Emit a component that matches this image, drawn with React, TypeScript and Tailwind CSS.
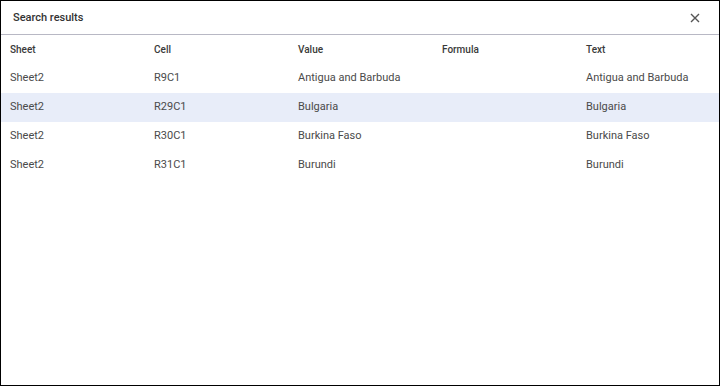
import React from "react";

const rows = [
  ["Sheet2", "R9C1", "Antigua and Barbuda", "", "Antigua and Barbuda"],
  ["Sheet2", "R29C1", "Bulgaria", "", "Bulgaria"],
  ["Sheet2", "R30C1", "Burkina Faso", "", "Burkina Faso"],
  ["Sheet2", "R31C1", "Burundi", "", "Burundi"],
];

export default function App() {
  return (
    <div
      className="w-[720px] h-[386px] border border-black bg-white flex flex-col box-border"
      style={{ fontFamily: "Roboto, 'Noto Sans', sans-serif" }}
    >
      <div className="h-[34px] shrink-0 flex items-center justify-between pl-[12px] pr-[19px] pt-[1px] border-b border-[#b8b8c4]">
        <span className="text-[11px] font-medium text-[#333]">Search results</span>
        <svg width="10" height="10" viewBox="0 0 10 10">
          <path d="M1 1 L9 9 M9 1 L1 9" stroke="#555" strokeWidth="1.4" />
        </svg>
      </div>
      <div className="grid grid-cols-[144px_144px_144px_144px_141px] pl-[9px] h-[29px] items-center text-[10px] font-medium text-[#3a3a3a]">
        <span>Sheet</span>
        <span>Cell</span>
        <span>Value</span>
        <span>Formula</span>
        <span>Text</span>
      </div>
      {rows.map((r, i) => (
        <div
          key={i}
          className={
            "grid grid-cols-[144px_144px_144px_144px_141px] pl-[9px] h-[29px] items-center text-[11px] text-[#4a4a4a] " +
            (i === 1 ? "bg-[#e8edf9]" : "")
          }
        >
          {r.map((c, j) => (
            <span key={j} className="whitespace-nowrap">
              {c}
            </span>
          ))}
        </div>
      ))}
    </div>
  );
}
